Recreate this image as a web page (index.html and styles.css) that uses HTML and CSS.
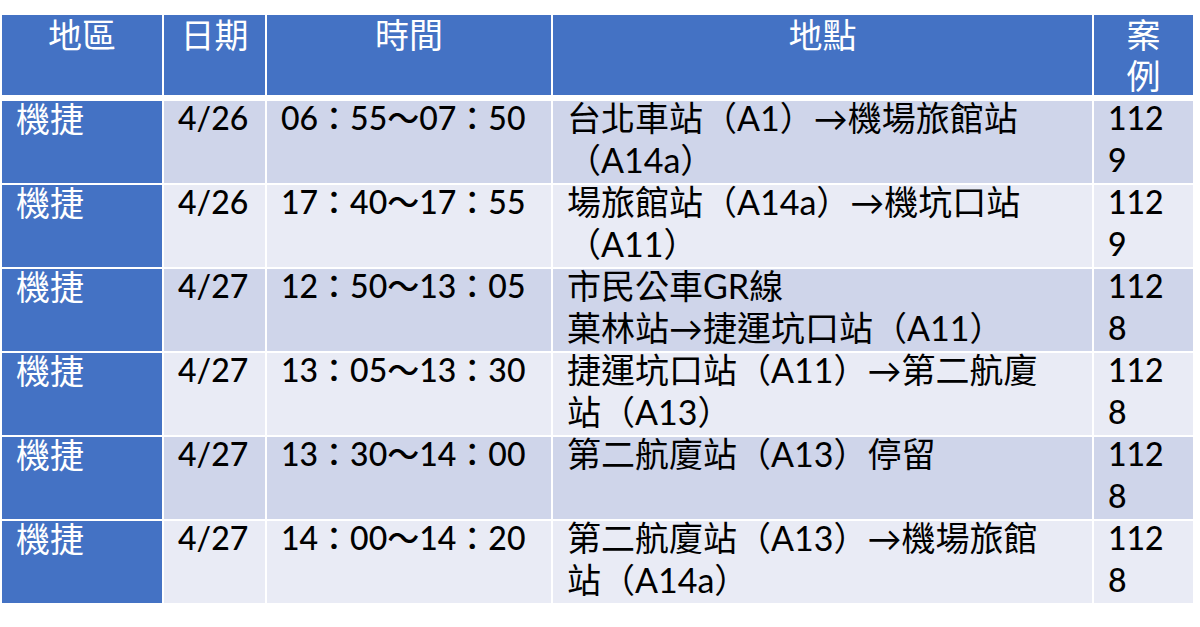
FILE: index.html
```html
<!DOCTYPE html>
<html lang="zh-Hant">
<head>
<meta charset="utf-8">
<title>機捷足跡</title>
<link rel="stylesheet" href="styles.css">
</head>
<body>
<table class="trip">
  <colgroup>
    <col class="c-area">
    <col class="c-date">
    <col class="c-time">
    <col class="c-place">
    <col class="c-case">
  </colgroup>
  <thead>
    <tr>
      <th>地區</th>
      <th>日期</th>
      <th>時間</th>
      <th>地點</th>
      <th>案<br>例</th>
    </tr>
  </thead>
  <tbody>
    <tr class="odd">
      <td class="area">機捷</td>
      <td class="num">4/26</td>
      <td class="num">06：55～07：50</td>
      <td class="place">台北車站（A1）→機場旅館站<br>（A14a）</td>
      <td class="num">112<br>9</td>
    </tr>
    <tr class="even">
      <td class="area">機捷</td>
      <td class="num">4/26</td>
      <td class="num">17：40～17：55</td>
      <td class="place">場旅館站（A14a）→機坑口站<br>（A11）</td>
      <td class="num">112<br>9</td>
    </tr>
    <tr class="odd">
      <td class="area">機捷</td>
      <td class="num">4/27</td>
      <td class="num">12：50～13：05</td>
      <td class="place">市民公車GR線<br>菓林站→捷運坑口站（A11）</td>
      <td class="num">112<br>8</td>
    </tr>
    <tr class="even">
      <td class="area">機捷</td>
      <td class="num">4/27</td>
      <td class="num">13：05～13：30</td>
      <td class="place">捷運坑口站（A11）→第二航廈<br>站（A13）</td>
      <td class="num">112<br>8</td>
    </tr>
    <tr class="odd">
      <td class="area">機捷</td>
      <td class="num">4/27</td>
      <td class="num">13：30～14：00</td>
      <td class="place">第二航廈站（A13）停留</td>
      <td class="num">112<br>8</td>
    </tr>
    <tr class="even">
      <td class="area">機捷</td>
      <td class="num">4/27</td>
      <td class="num">14：00～14：20</td>
      <td class="place">第二航廈站（A13）→機場旅館<br>站（A14a）</td>
      <td class="num">112<br>8</td>
    </tr>
  </tbody>
</table>
</body>
</html>
```

FILE: styles.css
```css
html, body {
  margin: 0;
  padding: 0;
  background: #ffffff;
}

body {
  padding-top: 13px;
  font-family: Lato, "Noto Sans CJK TC", sans-serif;
  color: #000000;
}

.trip {
  border-collapse: separate;
  border-spacing: 2px;
  table-layout: fixed;
  width: 1195px;
}

.c-area { width: 160px; }
.c-date { width: 101px; }
.c-time { width: 284px; }
.c-place { width: 539px; }
.c-case { width: 99px; }

.trip th,
.trip td {
  box-sizing: border-box;
  vertical-align: top;
  padding: 0 10px 0 14px;
  line-height: 42px;
  white-space: nowrap;
}

.trip th {
  height: 84px;
  background: #4472c4;
  border-bottom: 4px solid #ffffff;
  color: #ffffff;
  font-family: "Noto Sans CJK TC", sans-serif;
  font-size: 34px;
  font-weight: 400;
  text-align: center;
  padding: 0;
  line-height: 41px;
}

.trip th::before,
.trip td::before {
  content: "";
  display: block;
  margin-top: -4px;
}

.trip th::before {
  margin-top: -2px;
}

.trip td {
  height: 82px;
  font-size: 34px;
  font-weight: 500;
}

.odd td { background: #cfd5ea; }
.even td { background: #e9ebf5; }

.trip td.area {
  background: #4472c4;
  color: #ffffff;
  font-family: "Noto Sans CJK TC", sans-serif;
  font-weight: 400;
}

.trip td.num {
  font-size: 32px;
}

.trip td.place {
  font-size: 34px;
  font-weight: 400;
}
```
